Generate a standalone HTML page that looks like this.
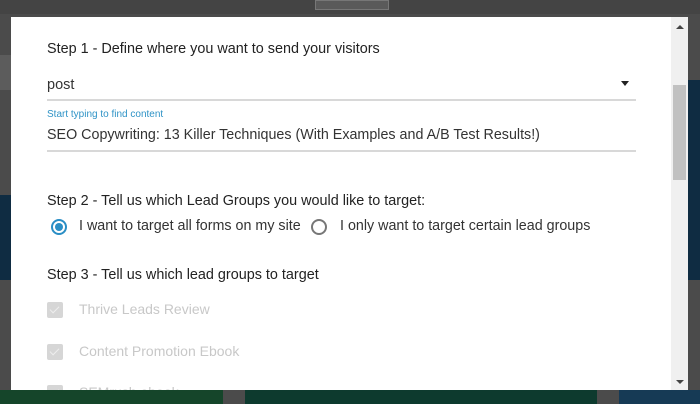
<!DOCTYPE html>
<html><head><style>
body{margin:0;width:700px;height:404px;overflow:hidden;background:#4b4b4b;position:relative;font-family:"Liberation Sans",Roboto,sans-serif}
.abs{position:absolute}
.modal{position:absolute;left:11px;top:17px;width:677px;height:373px;background:#fff;overflow:hidden}
.t{position:absolute;white-space:nowrap;color:#333}
.h{font-size:14.4px;color:#222}
.line{position:absolute;left:36px;width:589px;height:2px;background:#d8d8d8}
.cb{position:absolute;left:36px;width:16px;height:16px;background:#d6d6d6;border-radius:2px}
.cb:after{content:"";position:absolute;left:5px;top:2px;width:4px;height:8px;border:solid #eee;border-width:0 1.5px 1.5px 0;transform:rotate(45deg)}
.g{color:#c8c8c8;font-size:14px}
</style></head><body>
<div class="abs" style="left:0;top:0;width:700px;height:14px;background:#444"></div>
<div class="abs" style="left:315px;top:0;width:72px;height:8px;background:#5a5a5a;border:1px solid #777"></div>
<div class="abs" style="left:0;top:55px;width:11px;height:35px;background:#5c5c5c"></div>
<div class="abs" style="left:0;top:195px;width:11px;height:85px;background:#0f2c42"></div>
<div class="abs" style="left:688px;top:80px;width:12px;height:200px;background:#0f2c42"></div>
<div class="abs" style="left:0;top:390px;width:223px;height:14px;background:#15452a"></div>
<div class="abs" style="left:245px;top:390px;width:352px;height:14px;background:#0d3a2e"></div>
<div class="abs" style="left:619px;top:390px;width:81px;height:14px;background:#163a55"></div>
<div class="modal">
<div class="t h" style="left:36px;top:24px">Step 1 - Define where you want to send your visitors</div>
<div class="t" style="left:36px;top:60px;font-size:14.5px">post</div>
<div class="abs" style="left:610px;top:64px;width:0;height:0;border-left:4px solid transparent;border-right:4px solid transparent;border-top:5px solid #222"></div>
<div class="line" style="top:82px"></div>
<div class="t" style="left:36px;top:92px;font-size:10px;color:#2f93c6">Start typing to find content</div>
<div class="t" style="left:36px;top:110px;font-size:14.3px">SEO Copywriting: 13 Killer Techniques (With Examples and A/B Test Results!)</div>
<div class="line" style="top:133px"></div>
<div class="t h" style="left:36px;top:176px">Step 2 - Tell us which Lead Groups you would like to target:</div>
<div class="abs" style="left:40px;top:202px;width:12px;height:12px;border:2px solid #2a8ec5;border-radius:50%"></div>
<div class="abs" style="left:44px;top:206px;width:8px;height:8px;background:#2a8ec5;border-radius:50%"></div>
<div class="t" style="left:68px;top:201px;font-size:14.3px">I want to target all forms on my site</div>
<div class="abs" style="left:300px;top:202px;width:12px;height:12px;border:2px solid #777;border-radius:50%"></div>
<div class="t" style="left:329px;top:201px;font-size:14.3px">I only want to target certain lead groups</div>
<div class="t h" style="left:36px;top:250px">Step 3 - Tell us which lead groups to target</div>
<div class="cb" style="top:285px"></div>
<div class="t g" style="left:68px;top:284px">Thrive Leads Review</div>
<div class="cb" style="top:327px"></div>
<div class="t g" style="left:68px;top:326px">Content Promotion Ebook</div>
<div class="cb" style="top:368px"></div>
<div class="t g" style="left:68px;top:367px">SEMrush ebook</div>
<div class="abs" style="left:660px;top:0;width:17px;height:373px;background:#f0f0f0"></div>
<div class="abs" style="left:662px;top:68px;width:13px;height:95px;background:#c1c1c1"></div>
<div class="abs" style="left:665px;top:8px;width:0;height:0;border-left:4px solid transparent;border-right:4px solid transparent;border-bottom:4px solid #444"></div>
<div class="abs" style="left:665px;top:363px;width:0;height:0;border-left:4px solid transparent;border-right:4px solid transparent;border-top:4px solid #444"></div>
</div>
</body></html>
